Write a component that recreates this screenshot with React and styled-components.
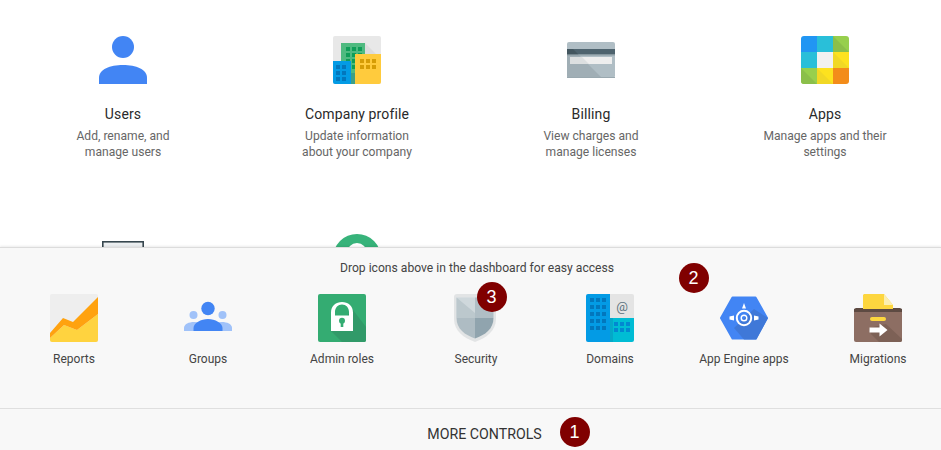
import React from 'react';
import styled, { createGlobalStyle } from 'styled-components';

const Global = createGlobalStyle`
  html, body { margin: 0; padding: 0; background: #fff; }
  body { font-family: Roboto, "Liberation Sans", sans-serif; }
`;

const Page = styled.div`
  position: relative;
  width: 941px;
  height: 450px;
  overflow: hidden;
  background: #fff;
`;

const Dashboard = styled.div`
  display: grid;
  grid-template-columns: repeat(4, 234px);
  grid-auto-rows: 198px;
  padding: 36px 0 0 6px;
`;

const Card = styled.div`
  display: flex;
  flex-direction: column;
  align-items: center;
  text-align: center;
`;

const CardTitle = styled.div`
  margin-top: 21px;
  font-size: 14px;
  line-height: 18px;
  letter-spacing: 0.13px;
  color: #2a2a2a;
`;

const CardText = styled.div`
  margin-top: 5px;
  font-size: 12.1px;
  line-height: 16px;
  color: #666;
`;

const Tray = styled.div`
  position: absolute;
  left: 0;
  right: 0;
  bottom: 0;
  height: 202px;
  display: flex;
  flex-direction: column;
  background: #f8f8f8;
  border-top: 1px solid #dcdcdc;
  box-shadow: 0 -1px 2px rgba(0, 0, 0, 0.08);
`;

const TrayBody = styled.div`
  flex: 1;
  width: 938px;
  margin-left: 7px;
`;

const Hint = styled.div`
  margin-top: 12px;
  padding-left: 2px;
  text-align: center;
  font-size: 12.13px;
  line-height: 16px;
  color: #444;
`;

const TrayRow = styled.div`
  display: grid;
  grid-template-columns: repeat(7, 134px);
  margin-top: 18px;
`;

const TrayItem = styled.div`
  display: flex;
  flex-direction: column;
  align-items: center;
  font-size: 12px;
  color: #444;
`;

const TrayLabel = styled.div`
  margin-top: 9px;
  line-height: 16px;
  white-space: nowrap;
`;

const MoreBar = styled.div`
  height: 33px;
  padding: 8px 0 0 28px;
  display: flex;
  align-items: center;
  justify-content: center;
  border-top: 1px solid #dfdfdf;
  font-size: 14.2px;
  color: #333;
`;

const Badge = styled.div`
  position: absolute;
  left: ${p => p.$left}px;
  top: ${p => p.$top}px;
  width: 30px;
  height: 30px;
  border-radius: 50%;
  background: #800000;
  color: #fff;
  font-size: 18px;
  display: flex;
  align-items: center;
  justify-content: center;
  font-family: "Liberation Sans", sans-serif;
`;

const Icon = ({ children, clip, r = 2 }) => (
  <svg width="48" height="48" viewBox="0 0 48 48" style={{ display: 'block', flex: 'none' }}>
    {clip && (
      <defs>
        <clipPath id={clip}>
          <rect width="48" height="48" rx={r} />
        </clipPath>
      </defs>
    )}
    {clip ? <g clipPath={`url(#${clip})`}>{children}</g> : children}
  </svg>
);

const UserIcon = () => (
  <Icon>
    <circle cx="24" cy="11" r="11" fill="#4285f4" />
    <path d="M0 48v-6C0 33 11 29 24 29s24 4 24 13v6z" fill="#4285f4" />
  </Icon>
);

const CompanyIcon = () => (
  <Icon clip="co">
    <rect width="48" height="48" fill="#e8e8e8" />
    <path d="M32 7l16 16v14H32z" fill="#dcdcdc" />
    <rect x="8" y="7" width="24" height="36" fill="#4fba80" />
    <g fill="#0f9d58">
      {[13, 19, 25].map(x => [11, 17, 23, 29].map(y => <rect key={x + '-' + y} x={x} y={y} width="4" height="4" />))}
    </g>
    <rect y="25" width="18" height="23" fill="#039be5" />
    <g fill="#0277bd">
      {[3, 9].map(x => [29, 35, 41].map(y => <rect key={x + '-' + y} x={x} y={y} width="4" height="4" />))}
    </g>
    <rect x="18" y="37" width="6" height="11" fill="#3f9f85" />
    <rect x="22" y="18" width="26" height="30" fill="#ffcb3d" />
    <g fill="#d69d06">
      {[27, 33, 39].map(x => [23, 29].map(y => <rect key={x + '-' + y} x={x} y={y} width="4" height="4" />))}
    </g>
  </Icon>
);

const BillingIcon = () => (
  <Icon clip="bi">
    <rect y="6" width="48" height="36" rx="2" fill="#b0bec5" />
    <path d="M0 13h6l29 29H2a2 2 0 0 1-2-2z" fill="#a0aeb5" />
    <rect y="13" width="48" height="5.5" fill="#4e636e" />
    <path d="M0 13h6l5.500 5.500H0z" fill="#43565f" />
    <rect y="18.500" width="48" height="1" fill="#8b9ba3" />
    <rect x="3" y="21" width="42" height="7" fill="#eeeeee" />
    <path d="M3 21h12l7 7H3z" fill="#dcdfe0" />
    <rect y="41" width="48" height="1" fill="#99a8af" />
  </Icon>
);

const AppsIcon = () => (
  <Icon clip="ap" r={3}>
    <rect width="16" height="16" fill="#2196f3" />
    <rect x="16" width="16" height="16" fill="#29bfd9" />
    <rect x="32" width="16" height="16" fill="#97cf4d" />
    <path d="M32 0l16 16H32z" fill="#8bbf4a" />
    <rect y="16" width="16" height="16" fill="#29bfd9" />
    <rect x="16" y="16" width="16" height="16" fill="#f1f1f1" />
    <rect x="32" y="16" width="16" height="16" fill="#fde21f" />
    <path d="M32 16l16 16H32z" fill="#f1d825" />
    <rect y="32" width="16" height="16" fill="#97cf4d" />
    <path d="M0 32l16 16H0z" fill="#8bbf4a" />
    <rect x="16" y="32" width="16" height="16" fill="#fde21f" />
    <path d="M16 32l16 16H16z" fill="#f1d825" />
    <rect x="32" y="32" width="16" height="16" fill="#f38c1a" />
  </Icon>
);

const ReportsIcon = () => (
  <Icon clip="re">
    <rect width="48" height="48" fill="#eeeeee" />
    <path d="M0 44L14 31l13 5L48 20v28H0z" fill="#ffd33f" />
    <path d="M0 39L13 24l10 4L48 3v17L27 36l-13-5L0 44z" fill="#ffa20f" />
  </Icon>
);

const GroupsIcon = () => (
  <Icon>
    <circle cx="9.500" cy="21" r="4" fill="#a0c2f9" />
    <circle cx="38.500" cy="21" r="4" fill="#a0c2f9" />
    <path d="M0 37v-3c0-4 5-6 10-6s9 1 11 3v6z" fill="#a0c2f9" />
    <path d="M48 37v-3c0-4-5-6-10-6s-9 1-11 3v6z" fill="#a0c2f9" />
    <circle cx="24" cy="14.500" r="6.700" fill="#4285f4" />
    <path d="M9.500 37v-3c0-5 7.500-9 14.500-9s14.500 4 14.500 9v3z" fill="#4285f4" />
  </Icon>
);

const AdminIcon = () => (
  <Icon clip="ad">
    <rect width="48" height="48" fill="#34ac72" />
    <path d="M35 16l13 17v15H24L13 37z" fill="#319a69" />
    <path d="M13 37V18.500C13 12 18 8 24 8s11 4 11 10.500V37zM17 21.500h14V18c0-4.500-3-7.500-7-7.500s-7 3-7 7.500z" fill="#fff" fillRule="evenodd" />
    <circle cx="24" cy="26.700" r="3" fill="#34ac72" />
    <rect x="22.700" y="27" width="2.600" height="6" fill="#34ac72" />
  </Icon>
);

const SecurityIcon = () => (
  <Icon>
    <path d="M2 3a3 3 0 0 1 3-3h36a3 3 0 0 1 3 3v22c0 12-10 19-21 23C12 44 2 37 2 25z" fill="#e2e4e5" />
    <path d="M4.500 3.500h18.500V24H4.500z" fill="#cfd8dc" />
    <path d="M4.500 3.500L23 19v5H4.500z" fill="#bcc8cd" />
    <path d="M23 3.500h18.500V24H23z" fill="#b0bec5" />
    <path d="M4.500 24H23v20.500C13 41 4.500 35 4.500 24z" fill="#aebcc3" />
    <path d="M23 24h18.500C41.500 35 33 41 23 44.500z" fill="#90a4ae" />
  </Icon>
);

const DomainsIcon = () => (
  <Icon clip="do">
    <rect x="24" width="24" height="24" fill="#e4e4e4" />
    <rect width="24" height="48" fill="#039be5" />
    <g fill="#0277bd">
      {[4, 10, 16].map(x => [4, 11, 18, 25, 32].map(y => <rect key={x + '-' + y} x={x} y={y} width="4" height="4" />))}
    </g>
    <rect x="24" y="24" width="24" height="24" fill="#00bcd4" />
    <rect x="24" y="24" width="3" height="24" fill="#05a7c8" />
    <g fill="#0288d1">
      {[28, 34, 40].map(x => [28, 34].map(y => <rect key={x + '-' + y} x={x} y={y} width="4" height="4" />))}
    </g>
    <text x="36" y="17" textAnchor="middle" fontSize="13" fontFamily="Roboto, sans-serif" fill="#5f7480">@</text>
  </Icon>
);

const EngineIcon = () => (
  <Icon>
    <path d="M1 24L12.500 3.500h23L47 24 35.500 44.500h-23z" fill="#4285f4" stroke="#4285f4" strokeWidth="2" strokeLinejoin="round" />
    <path d="M34 15l14 9-11.500 21.500H24L14 34z" fill="#3f78d8" />
    <circle cx="24" cy="24" r="7.200" fill="none" stroke="#fff" strokeWidth="2" />
    <circle cx="24" cy="24" r="2.800" fill="none" stroke="#fff" strokeWidth="1.400" />
    <path d="M24 9l2 5.500h-4z M9.500 22.500l4.500-1v5l-4.500-1z M38.500 22.500l-4.500-1v5l4.500-1z" fill="#fff" />
  </Icon>
);

const MigrationsIcon = () => (
  <Icon>
    <path d="M10 0h20l9 11v9H9V1z" fill="#fdd63f" />
    <path d="M30 0l9 11H30z" fill="#fbeeb0" />
    <path d="M0 15h48v31a2 2 0 0 1-2 2H2a2 2 0 0 1-2-2z" fill="#8d6e63" />
    <path d="M17 40l-2-6 17-4 16 15v1a2 2 0 0 1-2 2H25z" fill="#7d6156" />
    <path d="M0 15l2-1h7v4H0zM48 15l-2-1h-7v4h9zM9 15h30v3H9z" fill="#5d4a42" />
    <rect x="16" y="23" width="16" height="4" rx="2" fill="#fdd63f" />
    <path d="M15.500 33.500h10v-4l8 6.500-8 6.500v-4h-10z" fill="#fff" />
  </Icon>
);

const ReportsTile = () => (
  <Icon>
    <rect x="3.800" y="7.800" width="40.400" height="40" fill="#eceff1" stroke="#37474f" strokeWidth="1.600" />
  </Icon>
);

const RolesTile = () => (
  <Icon>
    <circle cx="24" cy="24" r="24" fill="#37b37a" />
    <circle cx="24" cy="19" r="10" fill="#fff" />
  </Icon>
);

const cards = [
  { icon: <UserIcon />, title: 'Users', lines: ['Add, rename, and', 'manage users'] },
  { icon: <CompanyIcon />, title: 'Company profile', lines: ['Update information', 'about your company'] },
  { icon: <BillingIcon />, title: 'Billing', lines: ['View charges and', 'manage licenses'] },
  { icon: <AppsIcon />, title: 'Apps', lines: ['Manage apps and their', 'settings'] },
];

const tray = [
  { icon: <ReportsIcon />, label: 'Reports' },
  { icon: <GroupsIcon />, label: 'Groups' },
  { icon: <AdminIcon />, label: 'Admin roles' },
  { icon: <SecurityIcon />, label: 'Security' },
  { icon: <DomainsIcon />, label: 'Domains' },
  { icon: <EngineIcon />, label: 'App Engine apps' },
  { icon: <MigrationsIcon />, label: 'Migrations' },
];

const App = () => (
  <Page>
    <Global />
    <Dashboard>
      {cards.map(c => (
        <Card key={c.title}>
          {c.icon}
          <CardTitle>{c.title}</CardTitle>
          <CardText>{c.lines[0]}<br />{c.lines[1]}</CardText>
        </Card>
      ))}
      <Card><ReportsTile /></Card>
      <Card><RolesTile /></Card>
    </Dashboard>
    <Tray>
      <TrayBody>
        <Hint>Drop icons above in the dashboard for easy access</Hint>
        <TrayRow>
          {tray.map(t => (
            <TrayItem key={t.label}>
              {t.icon}
              <TrayLabel>{t.label}</TrayLabel>
            </TrayItem>
          ))}
        </TrayRow>
      </TrayBody>
      <MoreBar>MORE CONTROLS</MoreBar>
      <Badge $left={476.5} $top={34}>3</Badge>
      <Badge $left={678.5} $top={15}>2</Badge>
      <Badge $left={559.5} $top={169}>1</Badge>
    </Tray>
  </Page>
);

export default App;
